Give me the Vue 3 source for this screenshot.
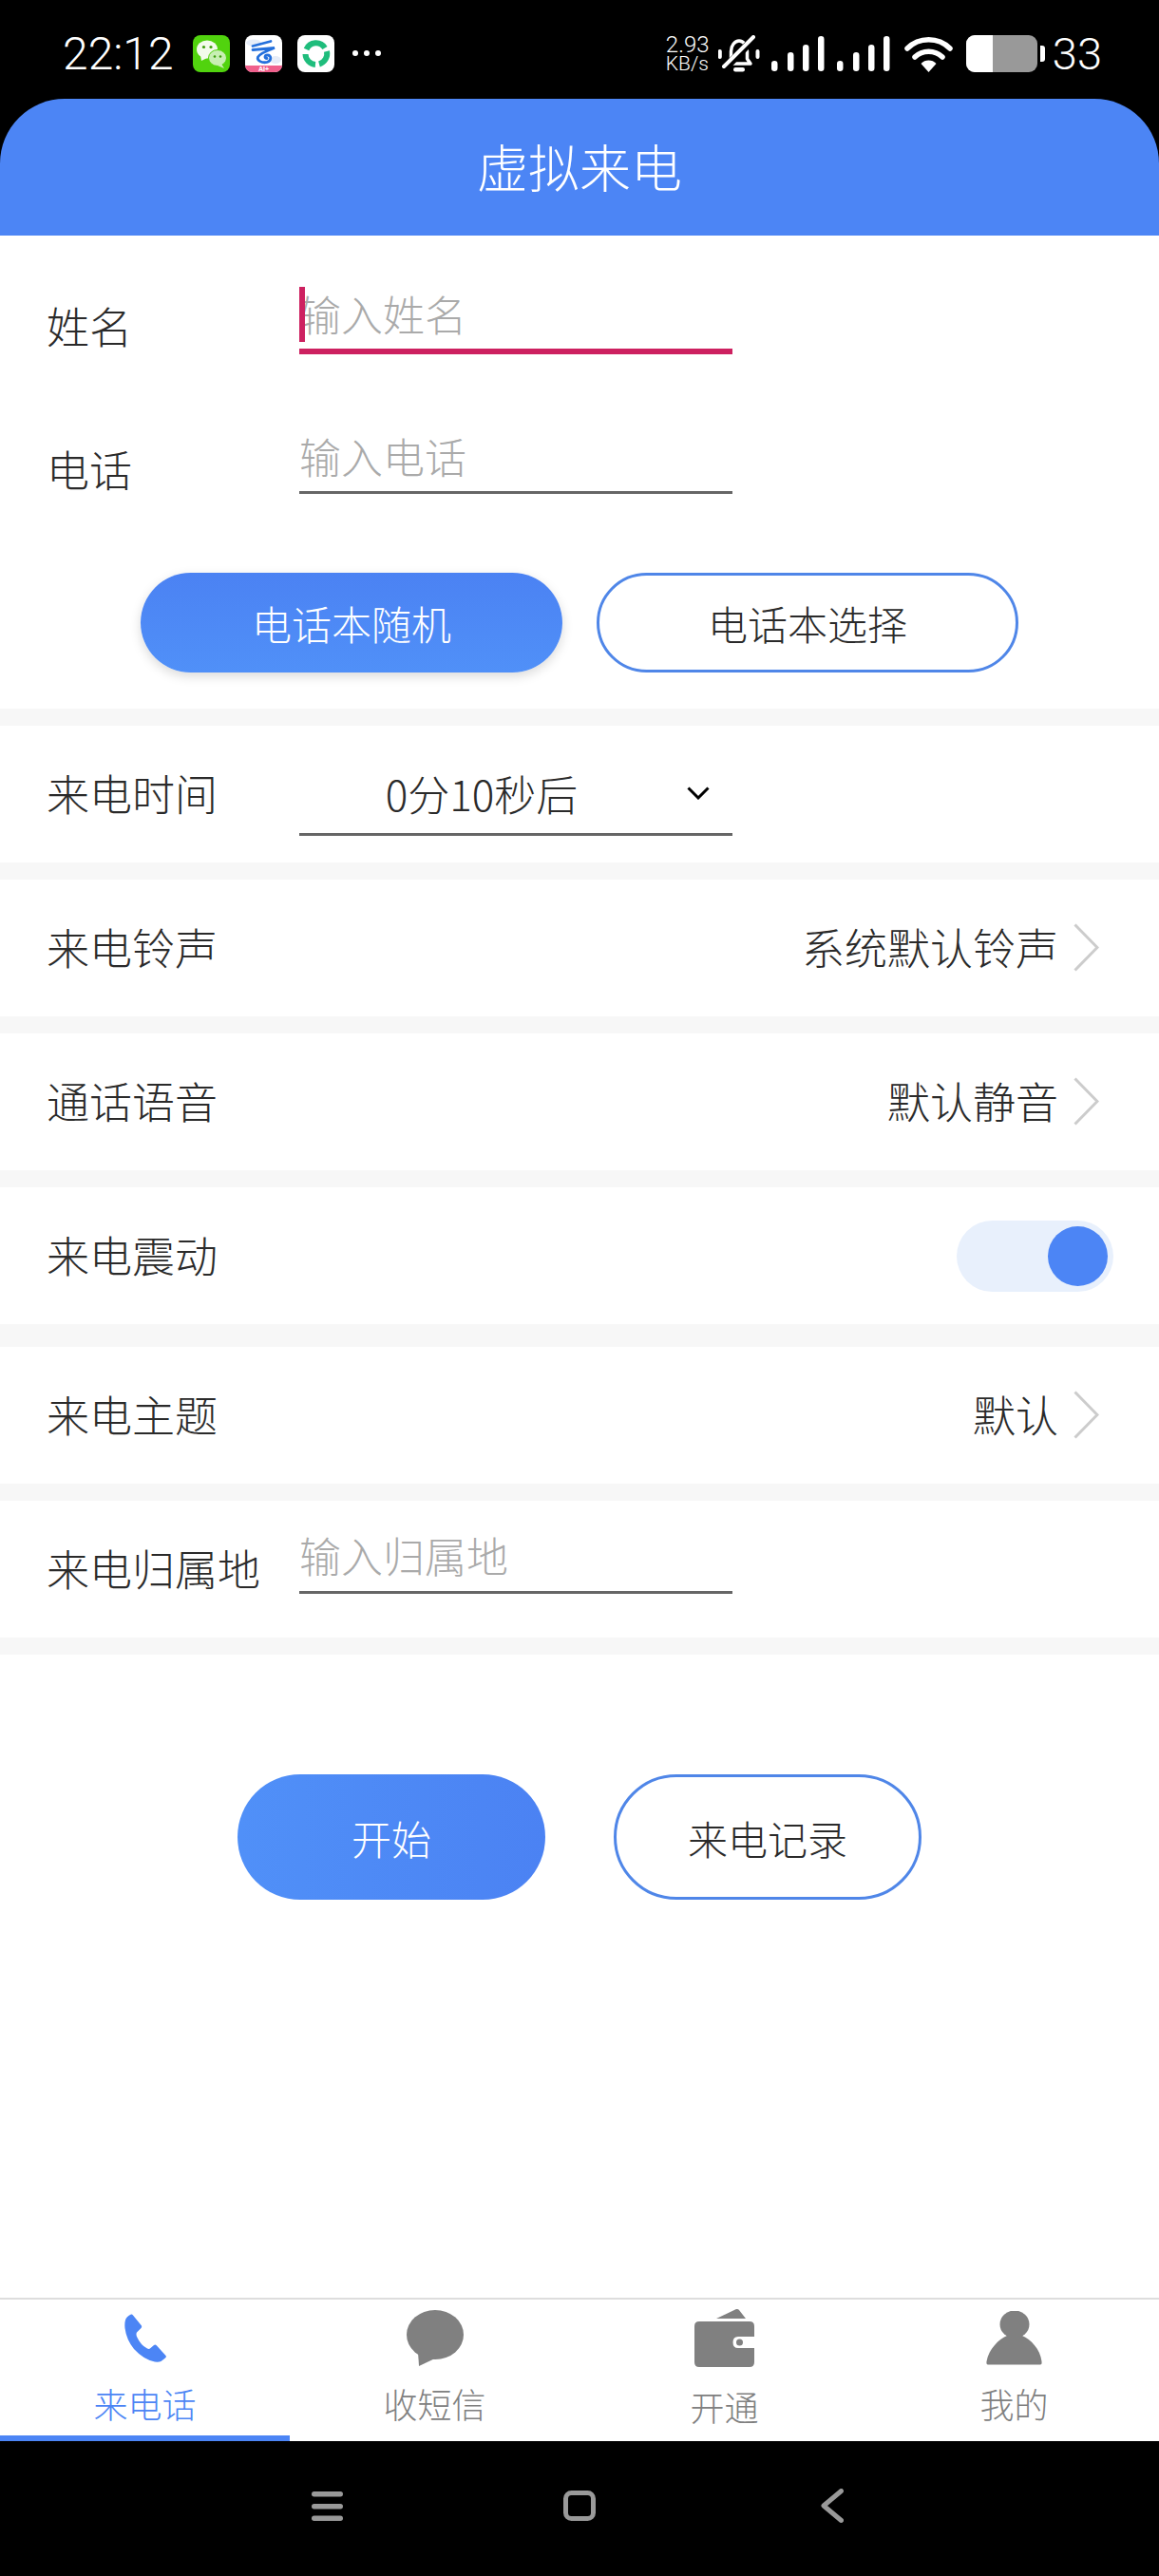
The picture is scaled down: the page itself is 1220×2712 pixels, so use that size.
<script setup>
import { ref } from 'vue';

const vibrate = ref(true);
const activeTab = ref(0);

const signalBars = [
  { x: 0, y: 27 },
  { x: 17, y: 18 },
  { x: 33, y: 10 },
  { x: 49, y: 1 },
];
const tabs = ['来电话', '收短信', '开通', '我的'];
</script>

<template>
  <div class="app">
    <!-- status bar -->
    <div class="status-bar">
      <div class="status-left">
        <span class="clock">22:12</span>
        <svg class="app-icon" viewBox="0 0 39 39">
          <rect width="39" height="39" rx="8" fill="#51d30e" />
          <ellipse cx="15" cy="15" rx="11" ry="9.5" fill="#f2fbec" />
          <path d="M8 21l1 6 6-3z" fill="#f2fbec" />
          <circle cx="11.5" cy="12.5" r="1.6" fill="#3c9e0c" />
          <circle cx="19" cy="12.5" r="1.6" fill="#3c9e0c" />
          <ellipse cx="26" cy="24" rx="9.5" ry="8.5" fill="#c8efb4" stroke="#51d30e" />
          <path d="M30 30l3 5-7-3z" fill="#c8efb4" />
          <circle cx="23" cy="22.5" r="1.3" fill="#3c9e0c" />
          <circle cx="29" cy="22.5" r="1.3" fill="#3c9e0c" />
        </svg>
        <svg class="app-icon" viewBox="0 0 39 39">
          <rect width="39" height="39" rx="8" fill="#fff" />
          <ellipse cx="9" cy="8" rx="8" ry="3.5" fill="#e6edf8" />
          <ellipse cx="32" cy="26" rx="6" ry="4" fill="#e6edf8" />
          <path d="M8 11.500L27 6.500M8 15.500L31 13.500C24 16 16 19 13.500 23C12 27 18 29.500 23 28.500C28 27 28 21 23.500 21C20.500 21 20 24.500 23 24.500" fill="none" stroke="#2470dc" stroke-width="2.800" stroke-linecap="round" />
          <path d="M0 32h39v-.5 0c0 4-3 7.500-8 7.500H8c-5 0-8-3.500-8-7.500z" fill="#f0608c" />
          <text x="19.500" y="38" text-anchor="middle" class="ai-text">AI+</text>
        </svg>
        <svg class="app-icon" viewBox="0 0 39 39">
          <rect width="39" height="39" rx="8" fill="#fff" />
          <g fill="none" stroke="#1fbd7c" stroke-width="6">
            <path d="M9.500 15A11 11 0 0 1 29 13.500" />
            <path d="M31 17A11.500 11.500 0 0 1 23 30.500" />
            <path d="M19 31A11.500 11.500 0 0 1 8.500 20" />
          </g>
        </svg>
        <span class="more-dots"><i></i><i></i><i></i></span>
      </div>
      <div class="status-right">
        <div class="speed">
          <span>2.93</span>
          <span class="speed-unit">KB/s</span>
        </div>
        <svg class="bell" viewBox="0 0 44 39">
          <path d="M1.800 17v6M41.500 17v6" stroke="#fff" stroke-width="4" stroke-linecap="round" />
          <path d="M10 30l3.500-5v-8c0-6 4-11 8.500-11s8.500 5 8.500 11v8l3.500 5z" fill="none" stroke="#fff" stroke-width="3.500" stroke-linejoin="round" />
          <rect x="16" y="34" width="12" height="4.500" rx="2.200" fill="#fff" />
          <path d="M6 36L37 4" stroke="#000" stroke-width="8" />
          <path d="M6 33L37 2" stroke="#fff" stroke-width="4" stroke-linecap="round" />
        </svg>
        <svg v-for="n in 2" :key="n" class="signal" viewBox="0 0 56 39">
          <rect v-for="b in signalBars" :key="b.x" :x="b.x" :y="b.y" width="6.500" :height="38 - b.y" rx="3.200" fill="#fff" />
        </svg>
        <svg class="wifi" viewBox="0 0 51 39">
          <path d="M3 14A32 32 0 0 1 48 14M11 23A21 21 0 0 1 40 23" fill="none" stroke="#fff" stroke-width="5.500" stroke-linecap="round" />
          <path d="M17.500 30A11 11 0 0 1 33.500 30L25.500 39z" fill="#fff" />
        </svg>
        <div class="battery"><div class="battery-fill"></div></div>
        <div class="battery-nub"></div>
        <span class="battery-num">33</span>
      </div>
    </div>

    <header class="header">虚拟来电</header>

    <main class="main">
      <section class="contact">
        <div class="form-row name-row">
          <span class="label">姓名</span>
          <div class="field focused">
            <i class="cursor"></i>
            <span class="placeholder">输入姓名</span>
          </div>
        </div>
        <div class="form-row phone-row">
          <span class="label">电话</span>
          <div class="field">
            <span class="placeholder">输入电话</span>
          </div>
        </div>
        <div class="book-btns">
          <button class="btn btn-fill book-btn">电话本随机</button>
          <button class="btn btn-line book-btn">电话本选择</button>
        </div>
      </section>

      <section class="list">
        <div class="row">
          <span class="label">来电时间</span>
          <div class="field select-field">
            <span class="select-value">0分10秒后</span>
            <svg class="select-arrow" viewBox="0 0 24 14">
              <path d="M1.500 1.500L12 12L22.500 1.500" fill="none" stroke="#000" stroke-width="3" />
            </svg>
          </div>
        </div>
        <div class="row">
          <span class="label">来电铃声</span>
          <div class="row-value">
            <span>系统默认铃声</span>
            <svg class="chevron" viewBox="0 0 27 51"><path d="M1.500 1.500L25 25.500L1.500 49.500" fill="none" stroke="#ccc" stroke-width="3" /></svg>
          </div>
        </div>
        <div class="row">
          <span class="label">通话语音</span>
          <div class="row-value">
            <span>默认静音</span>
            <svg class="chevron" viewBox="0 0 27 51"><path d="M1.500 1.500L25 25.500L1.500 49.500" fill="none" stroke="#ccc" stroke-width="3" /></svg>
          </div>
        </div>
        <div class="row">
          <span class="label">来电震动</span>
          <div class="switch" :class="{ on: vibrate }" @click="vibrate = !vibrate"><i class="knob"></i></div>
        </div>
        <div class="row theme-row">
          <span class="label">来电主题</span>
          <div class="row-value">
            <span>默认</span>
            <svg class="chevron" viewBox="0 0 27 51"><path d="M1.500 1.500L25 25.500L1.500 49.500" fill="none" stroke="#ccc" stroke-width="3" /></svg>
          </div>
        </div>
        <div class="row">
          <span class="label">来电归属地</span>
          <div class="field area-field">
            <span class="placeholder">输入归属地</span>
          </div>
        </div>
      </section>

      <section class="actions">
        <button class="btn btn-start action-btn">开始</button>
        <button class="btn btn-line action-btn">来电记录</button>
      </section>
    </main>

    <!-- bottom tabs -->
    <nav class="tabbar">
      <div v-for="(t, i) in tabs" :key="t" class="tab" :class="{ active: activeTab === i }" @click="activeTab = i">
        <div class="tab-icon">
          <svg v-if="i === 0" width="44" height="51" viewBox="0 0 44 51">
            <path d="M7 .5Q8 0 9 1.500L18 12.500Q18.500 14 17.500 15L13 19.500Q12 21 13 24Q17 33 24 36.500Q26 37.500 27.500 36L31 33Q32.500 32 34 33.500L43.500 44Q44.500 45.500 43 46.500L38.500 50Q36 51 32 50.500Q20 48 10 37Q2 27 .5 15Q0 10 1 6.500Q2 3 7 .5z" fill="#4c85f5" />
          </svg>
          <svg v-else-if="i === 1" width="60" height="59" viewBox="0 0 60 59">
            <ellipse cx="30" cy="26" rx="30" ry="26" fill="#808080" />
            <path d="M12 44L13 59L32 50z" fill="#808080" />
          </svg>
          <svg v-else-if="i === 2" width="63" height="62" viewBox="0 0 63 62">
            <path d="M23 11L44 1Q46 .5 47 2L54 11z" fill="#808080" />
            <path d="M5 14H58Q63 14 63 19V30H46Q40.500 30 40.500 36Q40.500 42 46 42H63V57Q63 62 58 62H5Q0 62 0 57V19Q0 14 5 14z" fill="#808080" />
            <circle cx="47.500" cy="36" r="3.500" fill="#808080" />
          </svg>
          <svg v-else width="59" height="57" viewBox="0 0 59 57">
            <ellipse cx="30" cy="14" rx="15.500" ry="14.500" fill="#808080" />
            <path d="M2 56.500Q0 56.500 .5 53C3 40 13 30 22 26H38C47 30 57 40 58.500 53Q59 56.500 57 56.500z" fill="#808080" />
          </svg>
        </div>
        <span class="tab-label">{{ t }}</span>
      </div>
    </nav>

    <!-- android nav -->
    <div class="sys-nav">
      <svg class="sys-menu" viewBox="0 0 33 31">
        <rect width="33" height="5.500" rx="2.700" fill="#999" />
        <rect y="13" width="33" height="5.500" rx="2.700" fill="#999" />
        <rect y="25.500" width="33" height="5.500" rx="2.700" fill="#999" />
      </svg>
      <svg class="sys-home" viewBox="0 0 34 32">
        <rect x="2.500" y="2.500" width="29" height="27" rx="6" fill="none" stroke="#999" stroke-width="5" />
      </svg>
      <svg class="sys-back" viewBox="0 0 24 36">
        <path d="M21.500 2.500L3 18L21.500 33.500" fill="none" stroke="#999" stroke-width="5" stroke-linecap="round" stroke-linejoin="round" />
      </svg>
    </div>
  </div>
</template>

<style>
html,
body {
  margin: 0;
  background: #000;
}
</style>

<style scoped>
.app {
  width: 1220px;
  height: 2712px;
  display: flex;
  flex-direction: column;
  background: #000;
  font-family: "Noto Sans CJK SC", "Liberation Sans", sans-serif;
  font-weight: 300;
  color: #2a2a2a;
}

.status-bar {
  height: 104px;
  box-sizing: border-box;
  padding: 37px 60px 0 66px;
  display: flex;
  justify-content: space-between;
  align-items: flex-start;
  color: #fff;
}
.status-left,
.status-right {
  display: flex;
  align-items: center;
  height: 39px;
}
.clock {
  font-family: Roboto, sans-serif;
  font-weight: 300;
  font-size: 48px;
  line-height: 39px;
  width: 137px;
}
.app-icon {
  width: 39px;
  height: 39px;
  margin-right: 16px;
}
.ai-text {
  font-family: "Liberation Sans", sans-serif;
  font-size: 7px;
  font-weight: 700;
  fill: #fff;
}
.more-dots {
  display: flex;
  gap: 6px;
  margin: 0 0 2px 3px;
}
.more-dots i {
  width: 6px;
  height: 6px;
  border-radius: 50%;
  background: #fff;
}
.speed {
  display: flex;
  flex-direction: column;
  width: 55px;
  font-family: Roboto, sans-serif;
  font-weight: 300;
  font-size: 24px;
  line-height: 20px;
}
.speed-unit {
  font-size: 21px;
}
.bell {
  width: 44px;
  height: 39px;
  margin-right: 12px;
}
.signal {
  width: 56px;
  height: 39px;
  margin-right: 13px;
}
.wifi {
  width: 51px;
  height: 39px;
  margin-left: 2px;
  margin-right: 14px;
}
.battery {
  width: 75px;
  height: 39px;
  border-radius: 9px;
  background: #999;
  overflow: hidden;
}
.battery-fill {
  width: 28px;
  height: 100%;
  background: #fff;
}
.battery-nub {
  width: 5px;
  height: 17px;
  margin-left: 3px;
  border-radius: 0 3px 3px 0;
  background: #fff;
}
.battery-num {
  font-family: Roboto, sans-serif;
  font-weight: 300;
  font-size: 47px;
  line-height: 39px;
  margin-left: 8px;
}

.header {
  height: 144px;
  background: #4c85f5;
  border-radius: 68px 68px 0 0;
  color: #fff;
  font-size: 54px;
  line-height: 141px;
  text-align: center;
}

.main {
  flex: 1;
  background: #fff;
}

.contact {
  height: 498px;
  box-sizing: border-box;
  padding-top: 52px;
}
.form-row {
  display: flex;
  align-items: flex-start;
  height: 73px;
  padding-left: 49px;
}
.phone-row {
  margin-top: 74px;
}
.phone-row .placeholder {
  margin-top: 3px;
}
.name-row .label {
  margin-top: 13px;
}
.phone-row .label {
  margin-top: 17px;
}
.label {
  width: 266px;
  flex-shrink: 0;
  font-size: 45px;
  line-height: 60px;
}
.field {
  position: relative;
  width: 456px;
  height: 73px;
  box-sizing: border-box;
  border-bottom: 3px solid #666;
  display: flex;
  align-items: flex-start;
}
.field.focused {
  border-bottom: 6px solid #cd2160;
}
.cursor {
  position: absolute;
  left: 0;
  top: 2px;
  width: 6px;
  height: 58px;
  background: #cd2160;
}
.placeholder {
  font-size: 44px;
  line-height: 60px;
  color: #aaa;
}
.book-btns {
  display: flex;
  justify-content: center;
  gap: 36px;
  margin-top: 83px;
}
.btn {
  box-sizing: border-box;
  border-radius: 70px;
  font-family: inherit;
  font-weight: 300;
  font-size: 42px;
  padding: 0;
  border: none;
  color: #2a2a2a;
  background: #fff;
}
.book-btn {
  width: 444px;
  height: 105px;
}
.btn-fill {
  color: #fff;
  background: linear-gradient(180deg, #4b82f3, #5090f8);
  box-shadow: 0 4px 12px rgba(0, 0, 0, 0.15);
}
.btn-line {
  border: 3px solid #4f86e8;
}

.list {
  display: flex;
  flex-direction: column;
  gap: 18px;
  padding: 18px 0;
  background: #f7f7f7;
}
.row {
  height: 144px;
  display: flex;
  align-items: center;
  justify-content: space-between;
  padding-left: 49px;
  background: #fff;
}
.theme-row {
  margin-top: 6px;
}
.row .label {
  width: 266px;
  margin-bottom: 3px;
}
.select-field {
  height: 88px;
  margin-right: 449px;
  align-items: center;
  justify-content: center;
}
.select-value {
  font-size: 44px;
  line-height: 60px;
  margin-right: 72px;
}
.select-arrow {
  position: absolute;
  right: 24px;
  top: 36px;
  width: 24px;
  height: 14px;
}
.area-field {
  margin-right: 449px;
  margin-bottom: 21px;
}
.area-field .placeholder {
  margin-top: 2px;
}
.row-value {
  display: flex;
  align-items: center;
  gap: 16px;
  margin-right: 63px;
  margin-bottom: 2px;
  font-size: 45px;
  line-height: 60px;
}
.chevron {
  width: 27px;
  height: 51px;
}
.switch {
  position: relative;
  width: 165px;
  height: 75px;
  margin-right: 48px;
  border-radius: 38px;
  background: #e8f0fc;
}
.knob {
  position: absolute;
  top: 6px;
  left: 6px;
  width: 63px;
  height: 63px;
  border-radius: 50%;
  background: #4c85f5;
}
.switch.on .knob {
  left: 96px;
}

.actions {
  display: flex;
  justify-content: center;
  gap: 72px;
  padding-top: 126px;
}
.action-btn {
  width: 324px;
  height: 132px;
}
.btn-start {
  color: #fff;
  background: linear-gradient(90deg, #5090f8, #4b82f3);
}

.tabbar {
  height: 151px;
  box-sizing: border-box;
  display: flex;
  border-top: 2px solid #ddd;
  background: #fff;
}
.tab {
  position: relative;
  width: 305px;
  display: flex;
  flex-direction: column;
  align-items: center;
  padding-top: 9px;
  box-sizing: border-box;
  color: #808080;
}
.tab.active {
  color: #4c85f5;
}
.tab.active::after {
  content: "";
  position: absolute;
  left: 0;
  right: 0;
  bottom: 0;
  height: 6px;
  background: #4c85f5;
}
.tab-icon {
  height: 62px;
  display: flex;
  align-items: center;
}
.tab-label {
  font-size: 36px;
  line-height: 36px;
  margin-top: 20px;
}
.tab:nth-child(3) .tab-label {
  margin-top: 23px;
}

.sys-nav {
  height: 142px;
  box-sizing: border-box;
  display: flex;
  align-items: center;
  padding: 0 0 6px 328px;
}
.sys-menu {
  width: 33px;
  height: 31px;
}
.sys-home {
  width: 34px;
  height: 32px;
  margin-left: 232px;
}
.sys-back {
  width: 24px;
  height: 36px;
  margin-left: 237px;
}
</style>
